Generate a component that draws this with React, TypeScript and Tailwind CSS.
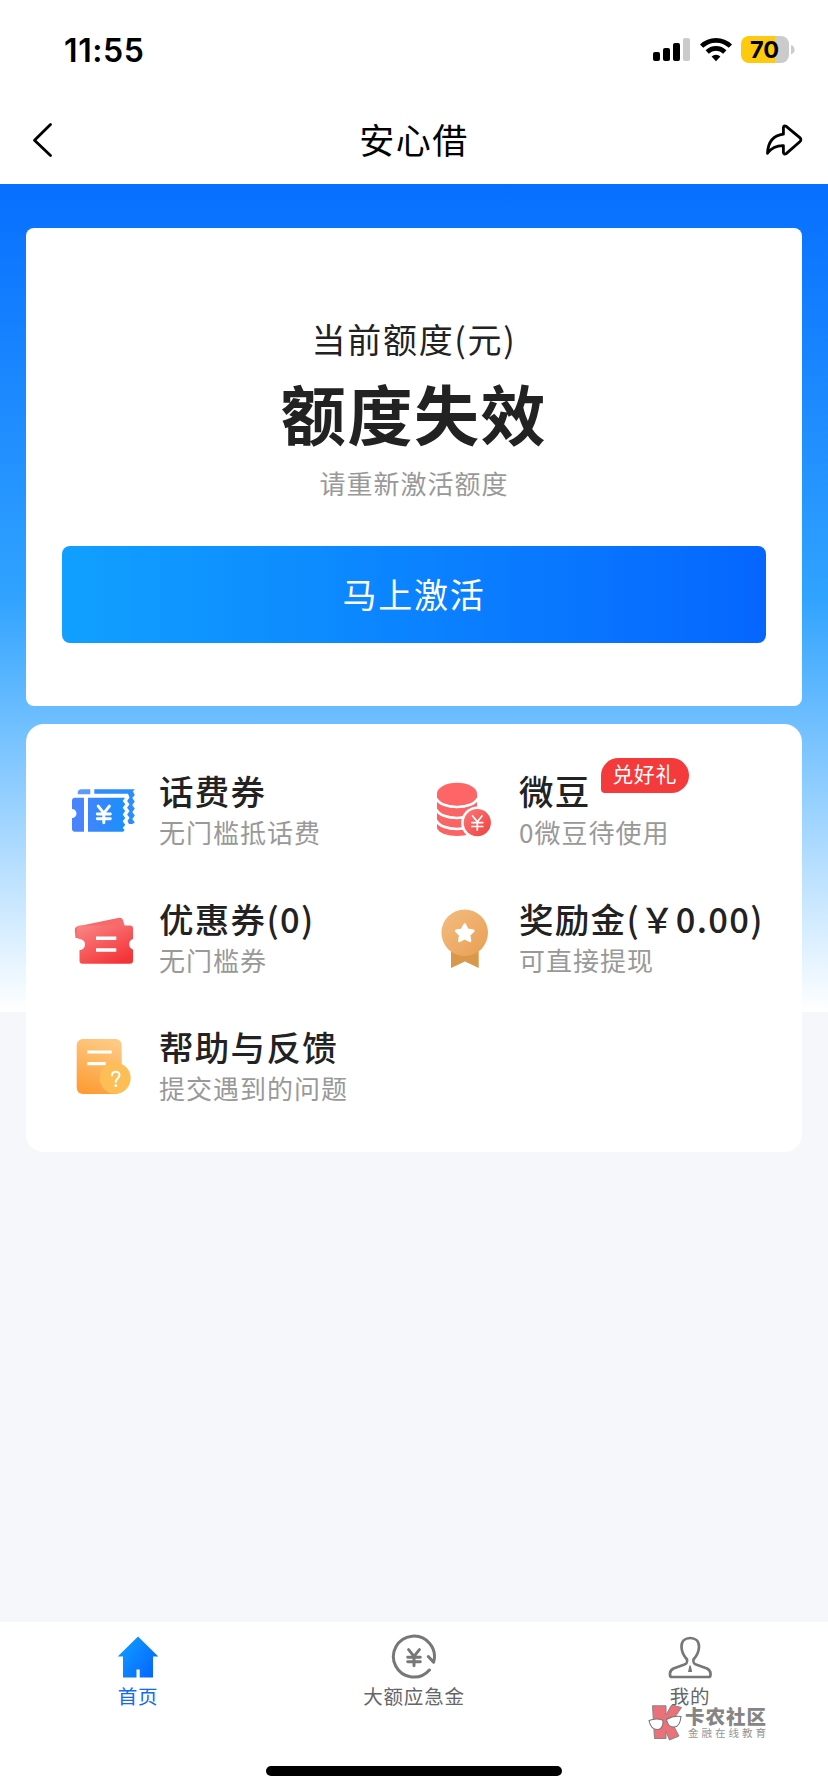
import type { ReactNode } from 'react';

function StatusBar() {
  return (
    <div className="flex h-24 items-start justify-between pl-[64px] pr-[33px] pt-[36px]">
      <span className="pt-px font-['Inter'] text-[32px] font-semibold leading-[28px] tracking-[0.6px] text-black">11:55</span>
      <div className="flex items-start">
        <svg width="38" height="27" viewBox="0 0 38 27" className="mr-[9px]">
          <rect x="0" y="16" width="7" height="9" rx="2" />
          <rect x="10" y="12" width="7" height="13" rx="2" />
          <rect x="20" y="7" width="7" height="18" rx="2" />
          <rect x="30" y="2" width="7" height="23" rx="2" fill="#cbcbcb" />
        </svg>
        <svg width="32" height="27" viewBox="0 0 32 27" className="mr-[9px]">
          <g fill="none" stroke="#000" strokeWidth="4.6">
            <path d="M1.6 10.2a20.6 20.6 0 0 1 28.8 0" />
            <path d="M7.2 16a12.6 12.6 0 0 1 17.6 0" />
          </g>
          <path d="M16 25.2 11.6 20.6a6.3 6.3 0 0 1 8.8 0z" />
        </svg>
        <div className="flex h-[27px] w-12 items-center justify-center rounded-lg bg-[linear-gradient(90deg,#fecb0c_34px,#cbcbcb_34px)] pr-px font-['Inter'] text-[23.5px] font-bold leading-[27px] text-black">
          70
        </div>
        <svg width="4" height="27" viewBox="0 0 4 27" className="ml-[2px]">
          <path d="M0 9q3.6 1.500 3.600 4.700T0 18.400z" fill="#cbcbcb" />
        </svg>
      </div>
    </div>
  );
}

function NavBar() {
  return (
    <header className="grid h-[88px] grid-cols-[1fr_auto_1fr] items-center bg-white px-[25px]">
      <svg width="36" height="40" viewBox="0 0 36 40" fill="none" stroke="#000" strokeWidth="2.8" strokeLinecap="round" strokeLinejoin="round">
        <path d="M25.500 4.500 9.500 20.300 25.500 35.500" />
      </svg>
      <h1 className="-mt-[3px] text-[35px] leading-[48px] tracking-[1.5px] text-black">安心借</h1>
      <svg width="40" height="40" viewBox="0 0 40 40" className="justify-self-end" fill="none" stroke="#000" strokeWidth="2.8" strokeLinecap="round" strokeLinejoin="round">
        <path d="M4.500 33.300C5 23 9.500 15.500 20.400 14.200V7.600Q20.600 5 23.200 6.300L36.800 17.600Q39 19.800 36.800 21.800L23.500 33.400Q20.600 35 20.400 32.300V25.700C12 25.500 8 28.500 4.500 33.300Z" />
      </svg>
    </header>
  );
}

function QuotaCard() {
  return (
    <section className="flex h-[478px] flex-col items-center rounded-lg bg-white px-9 pt-[87px]">
      <p className="text-[34px] leading-[48px] tracking-[1.7px] text-[#222]">当前额度(元)</p>
      <p className="mt-[7px] text-[65px] font-bold leading-[84px] tracking-[1.6px] text-[#222]">额度失效</p>
      <p className="mt-[11px] text-[26px] leading-[36px] tracking-[1px] text-[#999]">请重新激活额度</p>
      <button className="mt-[45px] h-[97px] w-full rounded-lg bg-[linear-gradient(90deg,#11a0ff,#0566ff)] pb-[2px] text-[34px] tracking-[1.8px] text-white">
        马上激活
      </button>
    </section>
  );
}

function Yen({ x, y, s, w, color = '#fff' }: { x: number; y: number; s: number; w: number; color?: string }) {
  return (
    <path
      transform={`translate(${x} ${y}) scale(${s})`}
      d="M-6-9 0-1.500 6-9M0-1.500V9M-7-.5H7M-7 4.500H7"
      fill="none"
      stroke={color}
      strokeWidth={w}
      strokeLinecap="round"
    />
  );
}

function PhoneTicketIcon() {
  return (
    <svg width="72" height="72" viewBox="0 0 72 72">
      <defs>
        <linearGradient id="phone" x1="0" x2="1" gradientUnits="objectBoundingBox">
          <stop stopColor="#3f86fc" />
          <stop offset="1" stopColor="#1b8ffb" />
        </linearGradient>
      </defs>
      <path d="M11.700 20.300V19Q11.700 15.300 15.500 15.300H24.300V20.300Z" fill="#5b9bfc" />
      <path d="M28.300 15.300H69l-2.200 2 2 3.700-2.500 3 2.500 3.600-2.500 3.400 2.500 3.700-2.500 3.300 2.500 3.600-2.500 3.400 2.500 3.500-2.500 1.500H63l-1.500-3 2-3.200-2.400-3.300 2.400-3.500-2.400-3.300 2.400-3.500-2.400-3.300 2.400-3.500-1.500-3.600H28.300Z" fill="#2d8dfb" />
      <path d="M18 23.700V57.700H9Q6 57.700 6 54.700V44a4.500 4.500 0 0 0 0-9V26.700Q6 23.700 9 23.700Z" fill="#4a84fc" />
      <path d="M22 23.700H59l-2.300 3.300 2.500 3.300-2.500 3.400 2.500 3.400-2.500 3.400 2.500 3.400-2.500 3.400 2.500 3.400-2.500 3.300 2 2-1.700 1.700H22Z" fill="url(#phone)" />
      <Yen x={37.800} y={40.500} s={0.93} w={3.200} />
    </svg>
  );
}

function CoinsIcon() {
  return (
    <svg width="72" height="72" viewBox="0 0 72 72">
      <defs>
        <linearGradient id="coin" x1="0" y1="0" x2="1" y2="1">
          <stop stopColor="#fd7778" />
          <stop offset="1" stopColor="#ef4040" />
        </linearGradient>
      </defs>
      <path d="M11 20V54c3 10.500 37 10.500 40 0V20Z" fill="#fb6464" />
      <g fill="none" stroke="#fff" strokeWidth="2.700">
        <path d="M10.500 24.500c4 11.300 37 11.300 41 0M10.500 35.500c4 11.300 37 11.300 41 0M10.500 46.500c4 11.300 37 11.300 41 0" />
      </g>
      <ellipse cx="31" cy="20" rx="20" ry="11.200" fill="#fe6566" />
      <circle cx="51.300" cy="48.700" r="16.200" fill="#fff" />
      <circle cx="51.300" cy="48.700" r="13.600" fill="url(#coin)" />
      <Yen x={51.300} y={49} s={0.78} w={2.200} />
    </svg>
  );
}

function CouponIcon() {
  return (
    <svg width="72" height="72" viewBox="0 0 72 72">
      <defs>
        <linearGradient id="coupon" x1="0" y1="0" x2=".7" y2="1">
          <stop stopColor="#fa8686" />
          <stop offset="1" stopColor="#f43538" />
        </linearGradient>
      </defs>
      <path d="M9.500 36 8.800 28Q8.800 24.800 12 24.300L53 15.700Q56 15.300 57 18L59 25V36Z" fill="#f56b6c" />
      <path d="M14 23.500H64Q67 23.500 67 26.500V37a5.500 5.500 0 0 0 0 10.500V58.700Q67 61.700 64 61.700H16.500Q13.500 61.700 13.500 58.700V48a5.500 5.500 0 0 0 0-11L10.800 36V26.500Q10.800 23.500 14 23.500Z" fill="url(#coupon)" />
      <path d="M30 36.300H50.300M30 48H50.300" stroke="#fff" strokeWidth="3.400" />
    </svg>
  );
}

function MedalIcon() {
  return (
    <svg width="72" height="72" viewBox="0 0 72 72">
      <defs>
        <linearGradient id="medal" x1="0" y1="0" x2="1" y2="1">
          <stop stopColor="#f3bd82" />
          <stop offset="1" stopColor="#e99f52" />
        </linearGradient>
      </defs>
      <path d="M25 44H52.700V66L39 59.500 25 66Z" fill="#d9984a" />
      <circle cx="38.700" cy="30.700" r="23.300" fill="url(#medal)" />
      <path d="m38.700 22.500 2.800 5.300 5.800 1-4.200 4.200.9 5.900-5.300-2.700-5.300 2.700.9-5.900-4.200-4.200 5.800-1Z" fill="#fff" stroke="#fff" strokeWidth="2.600" strokeLinejoin="round" />
    </svg>
  );
}

function HelpIcon() {
  return (
    <svg width="72" height="72" viewBox="0 0 72 72">
      <defs>
        <linearGradient id="doc" x1=".6" y1="0" x2=".3" y2="1">
          <stop stopColor="#fdca83" />
          <stop offset="1" stopColor="#fd9c35" />
        </linearGradient>
      </defs>
      <rect x="10.700" y="9" width="45" height="55" rx="6" fill="url(#doc)" />
      <circle cx="49.200" cy="48.300" r="15.500" fill="#fdbf55" />
      <path d="M21.300 22H45.700M21.300 33.600H39.700" stroke="#fff" strokeWidth="3.200" />
      <path d="M46 45.500c0-5 7.500-5 7.500-.4 0 3.200-3.700 3-3.700 6.900" fill="none" stroke="#fff" strokeWidth="2" strokeLinecap="round" />
      <circle cx="49.800" cy="55.700" r="1.400" fill="#fff" />
    </svg>
  );
}

type Entry = { title: string; note: string; icon: ReactNode; tag?: string };

const entries: Entry[] = [
  { title: '话费券', note: '无门槛抵话费', icon: <PhoneTicketIcon /> },
  { title: '微豆', note: '0微豆待使用', icon: <CoinsIcon />, tag: '兑好礼' },
  { title: '优惠券(0)', note: '无门槛券', icon: <CouponIcon /> },
  { title: '奖励金(￥0.00)', note: '可直接提现', icon: <MedalIcon /> },
  { title: '帮助与反馈', note: '提交遇到的问题', icon: <HelpIcon /> },
];

function EntryItem({ title, note, icon, tag }: Entry) {
  return (
    <div className="flex whitespace-nowrap">
      <div className="mr-[21px] mt-[6px] h-[72px] w-[72px] shrink-0">{icon}</div>
      <div>
        <div className="relative w-fit text-[34.500px] font-medium leading-[44px] tracking-[1.300px] text-[#222]">
          {title}
          {tag && (
            <span className="absolute -top-[10px] left-full ml-[10px] h-[35px] w-[88px] rounded-[18px] rounded-bl-[4px] bg-[#f43a3b] text-center text-[21px] font-normal leading-[31px] tracking-[0.600px] text-white">
              {tag}
            </span>
          )}
        </div>
        <p className="mt-[2px] text-[26px] leading-[36px] tracking-[1px] text-[#999]">{note}</p>
      </div>
    </div>
  );
}

function HomeIcon() {
  return (
    <svg width="46" height="46" viewBox="0 0 46 46">
      <defs>
        <linearGradient id="home" x1="0" y1=".1" x2="1" y2=".8">
          <stop stopColor="#11a0ff" />
          <stop offset="1" stopColor="#0566ff" />
        </linearGradient>
      </defs>
      <path d="M23 2.500 43.300 22.500H38V43.500H24.700V35.500H21.500V43.500H8V22.500H2.700Z" fill="url(#home)" />
    </svg>
  );
}

function FundIcon() {
  return (
    <svg width="46" height="46" viewBox="0 0 46 46" fill="none" stroke="#777" strokeWidth="3" strokeLinecap="round" strokeLinejoin="round">
      <path d="M38.400 36A20.500 20.500 0 1 1 42.600 28.300L37.300 22.500" />
      <Yen x={23} y={23.700} s={0.9} w={3.300} color="#777" />
    </svg>
  );
}

function PersonIcon() {
  return (
    <svg width="46" height="46" viewBox="0 0 46 46" fill="none" stroke="#777" strokeWidth="2.700" strokeLinejoin="round">
      <path d="M20 25.500C16.500 21.500 14.500 18 14.500 12.500 14.500 7 18 4 23.200 4S32 7 32 12.500C32 18 30 21.500 26.500 25.500 26 28.500 26.500 29.500 29 30.500L40 34.500Q43.500 36.500 43.500 39.500V41Q43.500 43 41.500 43H5Q3 43 3 41V39.500Q3 36.500 6.500 34.500L17.500 30.500C20 29.500 20.500 28.500 20 25.500Z" />
      <path d="M22.500 31.500H23.700L25.200 38H21Z" fill="#777" stroke="none" />
    </svg>
  );
}

const tabs: { label: string; icon: ReactNode; active?: boolean }[] = [
  { label: '首页', icon: <HomeIcon />, active: true },
  { label: '大额应急金', icon: <FundIcon /> },
  { label: '我的', icon: <PersonIcon /> },
];

function CommunityMark() {
  return (
    <div className="absolute left-[648px] top-[82px] flex">
      <svg width="36" height="36" viewBox="0 0 36 36" className="mt-px">
        <path d="M4.500.8H18V10L23.500 0 33.500 2.500 23.500 17 31 31 21.500 35 18 26.500V33.500H6.500Z" fill="#ec7078" stroke="#858585" strokeWidth="1" strokeLinejoin="round" />
        <g fill="#fff" stroke="#777" strokeWidth="1.100">
          <path d="M1 15.500Q8 12.500 15 15.300 15.500 24 10 24.500 3 25 1 15.500ZM18.500 14.500Q25 10.500 33 11.500 32 21.500 26.500 22 20 22.500 18.500 14.500Z" />
        </g>
      </svg>
      <div className="whitespace-nowrap pl-px pt-px">
        <p className="text-[19.500px] font-black leading-[22px] tracking-[1px] text-[#858585]">卡农社区</p>
        <p className="pl-[3px] text-[10.500px] leading-[12px] tracking-[3px] text-[#959595]">金融在线教育</p>
      </div>
    </div>
  );
}

function TabBar() {
  return (
    <nav className="relative flex h-[170px] flex-col items-center bg-white">
      <div className="grid w-full grid-cols-3 pt-[12px]">
        {tabs.map((t) => (
          <div key={t.label} className="flex flex-col items-center">
            {t.icon}
            <span className={t.active ? 'mt-[2px] text-[19.500px] leading-[28px] tracking-[0.800px] text-[#1269f3]' : 'mt-[2px] text-[19.500px] leading-[28px] tracking-[0.800px] text-[#666]'}>
              {t.label}
            </span>
          </div>
        ))}
      </div>
      <CommunityMark />
      <div className="mb-4 mt-auto h-[10px] w-[296px] rounded-full bg-black" />
    </nav>
  );
}

export default function App() {
  return (
    <div className="flex h-[1792px] w-[828px] flex-col overflow-hidden bg-white font-['Noto_Sans_CJK_SC',sans-serif]">
      <StatusBar />
      <NavBar />
      <main className="flex-1 bg-[#f5f7fb] bg-[linear-gradient(180deg,#076fff_0%,#30a3ff_50%,#ffffff_100%)] bg-[length:100%_828px] bg-no-repeat px-[26px] pt-11">
        <QuotaCard />
        <section className="mt-[18px] grid h-[428px] auto-rows-[128px] grid-cols-[360px_360px] rounded-[18px] bg-white pl-10 pt-11">
          {entries.map((e) => (
            <EntryItem key={e.title} {...e} />
          ))}
        </section>
      </main>
      <TabBar />
    </div>
  );
}
